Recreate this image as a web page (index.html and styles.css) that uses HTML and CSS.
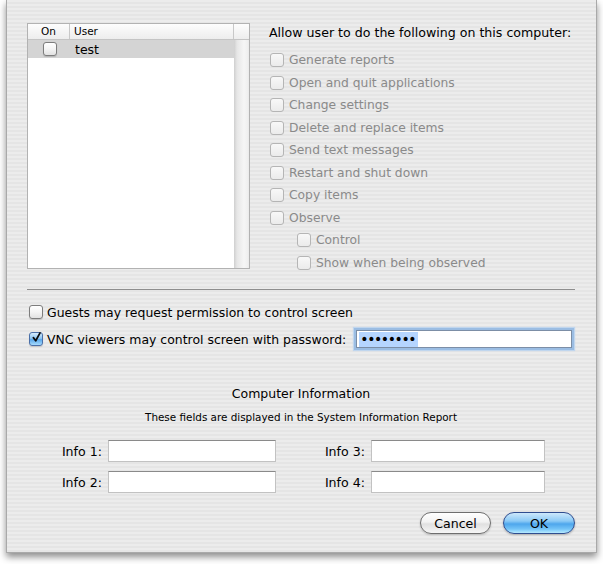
FILE: index.html
```html
<!DOCTYPE html>
<html>
<head>
<meta charset="utf-8">
<link rel="stylesheet" href="styles.css">
</head>
<body>
<div class="window">
  <div class="top">
    <div class="table">
      <div class="thead">
        <div class="th th-on">On</div>
        <div class="th th-user">User</div>
        <div class="th th-corner"></div>
      </div>
      <div class="tbody">
        <div class="rows">
          <div class="row selected">
            <div class="cell-on"><span class="cb"></span></div>
            <div class="cell-user">test</div>
          </div>
        </div>
        <div class="scroll"></div>
      </div>
    </div>
    <div class="perms">
      <div class="heading">Allow user to do the following on this computer:</div>
      <ul class="list">
        <li class="item"><span class="cb dis"></span>Generate reports</li>
        <li class="item"><span class="cb dis"></span>Open and quit applications</li>
        <li class="item"><span class="cb dis"></span>Change settings</li>
        <li class="item"><span class="cb dis"></span>Delete and replace items</li>
        <li class="item"><span class="cb dis"></span>Send text messages</li>
        <li class="item"><span class="cb dis"></span>Restart and shut down</li>
        <li class="item"><span class="cb dis"></span>Copy items</li>
        <li class="item"><span class="cb dis"></span>Observe</li>
        <li class="item sub"><span class="cb dis"></span>Control</li>
        <li class="item sub"><span class="cb dis"></span>Show when being observed</li>
      </ul>
    </div>
  </div>
  <div class="sep"></div>
  <div class="opt guests"><span class="cb"></span>Guests may request permission to control screen</div>
  <div class="opt vnc">
    <span class="cb checked"><svg viewBox="0 0 14 14" width="14" height="14"><path d="M3 6.5 L6 10.5 L11.5 0.5" fill="none" stroke="#0a0a0a" stroke-width="2.2" stroke-linecap="round" stroke-linejoin="round"/></svg></span>
    <span class="vnc-label">VNC viewers may control screen with password:</span>
    <div class="pw"><span class="pw-sel">••••••••</span></div>
  </div>
  <div class="info-title">Computer Information</div>
  <div class="info-sub">These fields are displayed in the System Information Report</div>
  <div class="info-grid">
    <div class="info-row">
      <span class="lbl lbl1">Info 1:</span><span class="field f1"></span>
      <span class="lbl lbl3">Info 3:</span><span class="field f3"></span>
    </div>
    <div class="info-row">
      <span class="lbl lbl1">Info 2:</span><span class="field f1"></span>
      <span class="lbl lbl3">Info 4:</span><span class="field f3"></span>
    </div>
  </div>
  <div class="buttons">
    <button class="btn cancel">Cancel</button>
    <button class="btn ok">OK</button>
  </div>
</div>
</body>
</html>
```
FILE: styles.css
```css
html, body {
  margin: 0;
  padding: 0;
  background: #ffffff;
}
body {
  font-family: "DejaVu Sans", "Liberation Sans", sans-serif;
  font-size: 12px;
  color: #000;
  width: 603px;
  height: 564px;
  overflow: hidden;
}
.window {
  margin-left: 6px;
  width: 548px;
  height: 529px;
  padding: 23px 21px 0 20px;
  border: 1px solid #a9a9a9;
  border-top: none;
  background: repeating-linear-gradient(to bottom, #ececec 0px, #ececec 2px, #e5e5e5 2px, #e5e5e5 4px);
  box-shadow: 0 4px 7px rgba(0,0,0,0.45);
}
.top {
  display: flex;
  height: 246px;
}
.table {
  width: 221px;
  height: 244px;
  border: 1px solid #b2b2b2;
  background: #fff;
  display: flex;
  flex-direction: column;
}
.thead {
  display: flex;
  height: 15px;
  border-bottom: 1px solid #c4c4c4;
  background: linear-gradient(to bottom, #fdfdfd, #ededed);
  font-size: 10.5px;
  line-height: 15px;
}
.th { box-sizing: border-box; }
.th-on { width: 42px; text-align: center; border-right: 1px solid #c8c8c8; }
.th-user { width: 164px; padding-left: 4px; border-right: 1px solid #c8c8c8; }
.th-corner { flex: 1; }
.tbody {
  flex: 1;
  display: flex;
}
.rows { width: 206px; }
.row {
  display: flex;
  height: 18px;
  align-items: center;
}
.row.selected { background: #d4d4d4; }
.cell-on { width: 43px; display: flex; justify-content: center; }
.cell-user { padding-left: 4px; font-size: 12.5px; }
.scroll {
  flex: 1;
  background: linear-gradient(to right, #cfcfcf 0px, #e6e6e6 3px, #f6f6f6 10px, #efefef 14px, #e2e2e2 16px);
}
.cb {
  display: inline-flex;
  align-items: center;
  justify-content: center;
  box-sizing: border-box;
  width: 14px;
  height: 14px;
  border: 1px solid #7d7d7d;
  border-radius: 3px;
  background: linear-gradient(to bottom, #ffffff 0%, #f4f4f4 50%, #e2e2e2 100%);
  box-shadow: 0 1px 1px rgba(0,0,0,0.15);
  flex: none;
}
.cb.dis {
  border-color: #b5b5b5;
  background: linear-gradient(to bottom, #f8f8f8, #ebebeb);
  box-shadow: none;
}
.cb.checked {
  border-color: #4a6fa8;
  background: linear-gradient(to bottom, #d6ecfd 0%, #8cc4f2 45%, #5aa7ea 55%, #a6dafc 100%);
  overflow: visible;
}
.cb.checked svg { margin-top: -3px; margin-left: 1px; }
.perms {
  margin-left: 19px;
  flex: 1;
}
.heading {
  height: 20px;
  line-height: 20px;
  font-size: 12.6px;
  white-space: nowrap;
}
.list {
  list-style: none;
  margin: 6px 0 0 0;
  padding: 0;
}
.item {
  display: flex;
  align-items: center;
  height: 22.5px;
  color: #8a8a8a;
  font-size: 12.3px;
  padding-left: 1px;
}
.item .cb { margin-right: 5px; }
.item.sub { padding-left: 28px; }
.sep {
  margin-top: 20px;
  height: 1px;
  background: #8e8e8e;
}
.opt {
  display: flex;
  align-items: center;
  font-size: 12.45px;
}
.opt .cb { margin-left: 2px; margin-right: 4px; }
.guests {
  margin-top: 11px;
  height: 22px;
}
.vnc {
  margin-top: 4px;
  height: 24px;
}
.vnc-label { margin-right: 10px; }
.pw {
  box-sizing: border-box;
  flex: 1;
  margin-right: 3px;
  height: 18px;
  background: #fff;
  border: 1px solid #7c8ea6;
  box-shadow: 0 0 0 2px #9bbde3, 0 0 1px 3px #c0d6ee;
  display: flex;
  align-items: center;
  padding-left: 2px;
}
.pw-sel {
  background: #b5d5ff;
  font-size: 14px;
  letter-spacing: -1.4px;
  line-height: 15px;
  padding: 0 3px 0 1px;
}
.info-title {
  margin-top: 35px;
  text-align: center;
  height: 16px;
  line-height: 16px;
  font-size: 12.5px;
}
.info-sub {
  margin-top: 8px;
  text-align: center;
  height: 14px;
  line-height: 14px;
  font-size: 10.4px;
}
.info-grid {
  margin-top: 16px;
  display: flex;
  flex-direction: column;
  gap: 9px;
}
.info-row {
  display: flex;
  align-items: center;
  height: 22px;
}
.lbl {
  text-align: right;
  font-size: 12.6px;
  margin-right: 6px;
}
.lbl1 { width: 75px; }
.lbl3 { width: 89px; }
.field {
  box-sizing: border-box;
  height: 22px;
  background: #fff;
  border: 1px solid #c2c2c2;
  border-top-color: #8a8a8a;
}
.f1 { width: 168px; }
.f3 { width: 174px; }
.buttons {
  margin-top: 19px;
  display: flex;
  justify-content: flex-end;
  gap: 12px;
}
.btn {
  font-family: "DejaVu Sans", "Liberation Sans", sans-serif;
  font-size: 12.6px;
  height: 22px;
  border-radius: 11px;
  padding: 0;
  color: #000;
}
.cancel {
  width: 71px;
  border: 1px solid #6e6e6e;
  background: linear-gradient(to bottom, #ffffff 0%, #f2f2f2 45%, #e0e0e0 55%, #f6f6f6 100%);
  box-shadow: 0 1px 2px rgba(0,0,0,0.2);
}
.ok {
  width: 72px;
  border: 1px solid #2f4d8f;
  background: linear-gradient(to bottom, #cde8fb 0%, #8ccaf6 40%, #4ea6ec 55%, #74c4f8 80%, #b7eafe 100%);
  box-shadow: 0 1px 2px rgba(0,0,0,0.25);
}
```
